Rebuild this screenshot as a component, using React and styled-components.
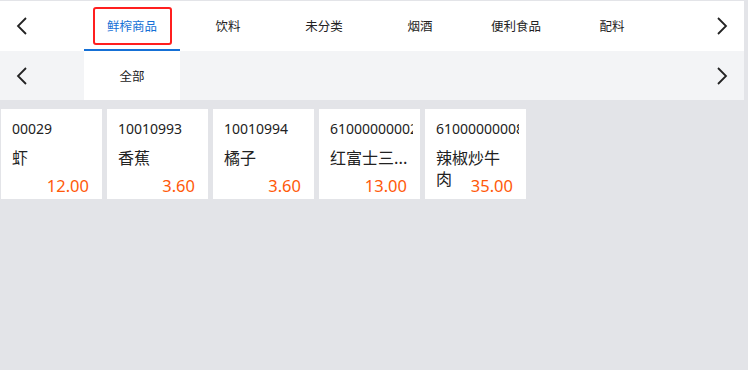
import React from 'react';
import styled, { createGlobalStyle } from 'styled-components';

const categories = ['鲜榨商品', '饮料', '未分类', '烟酒', '便利食品', '配料'];
const subCategories = ['全部'];

const products = [
  { code: '00029', name: '虾', price: '12.00' },
  { code: '10010993', name: '香蕉', price: '3.60' },
  { code: '10010994', name: '橘子', price: '3.60' },
  { code: '61000000002', name: '红富士三...', price: '13.00', single: true },
  { code: '61000000008', name: '辣椒炒牛肉', price: '35.00' },
];

const Chevron = ({ dir }) => (
  <svg width="12" height="18" viewBox="0 0 12 18">
    <polyline
      points={dir === 'left' ? '10,1 2,9 10,17' : '2,1 10,9 2,17'}
      fill="none"
      stroke="#222"
      strokeWidth="1.8"
      strokeLinejoin="miter"
    />
  </svg>
);

const App = () => {
  return (
    <>
      <GlobalStyle />
      <S_page>
        <S_tabBar>
          <S_arrow><Chevron dir="left" /></S_arrow>
          <S_tabList>
            {categories.map((c, i) => (
              <S_tab key={c} active={i === 0}>
                {c}
                {i === 0 && <S_marker />}
              </S_tab>
            ))}
          </S_tabList>
          <S_arrow><Chevron dir="right" /></S_arrow>
        </S_tabBar>
        <S_subBar>
          <S_arrow><Chevron dir="left" /></S_arrow>
          <S_tabList>
            {subCategories.map((c, i) => (
              <S_subTab key={c} active={i === 0}>{c}</S_subTab>
            ))}
          </S_tabList>
          <S_arrow><Chevron dir="right" /></S_arrow>
        </S_subBar>
        <S_grid>
          {products.map((p) => (
            <S_card key={p.code}>
              <S_code>{p.code}</S_code>
              <S_name single={p.single}>{p.name}</S_name>
              <S_price>{p.price}</S_price>
            </S_card>
          ))}
        </S_grid>
      </S_page>
    </>
  );
};

export default App;

const GlobalStyle = createGlobalStyle`
  html, body {
    margin: 0;
    padding: 0;
    background: #e3e4e8;
  }
  body {
    font-family: "Noto Sans", "Noto Sans CJK SC", sans-serif;
    color: #222;
  }
`;

const S_page = styled.div`
  width: 748px;
  height: 370px;
  padding-top: 1px;
  box-sizing: border-box;
  background: #e3e4e8;
`;

const S_tabBar = styled.div`
  display: flex;
  align-items: stretch;
  height: 50px;
  margin-right: 4px;
  background: #fff;
`;

const S_subBar = styled(S_tabBar)`
  height: 49px;
  background: #f3f4f6;
`;

const S_arrow = styled.div`
  width: 44px;
  flex: none;
  display: flex;
  align-items: center;
  justify-content: center;
  cursor: pointer;
`;

const S_tabList = styled.div`
  flex: 1;
  display: flex;
  padding-left: 40px;
  overflow: hidden;
`;

const S_tab = styled.div`
  position: relative;
  width: 96px;
  flex: none;
  display: flex;
  align-items: center;
  justify-content: center;
  box-sizing: border-box;
  padding-top: 1px;
  font-family: "Noto Sans CJK SC", sans-serif;
  font-size: 12.5px;
  color: ${(p) => (p.active ? '#1570d6' : '#222')};
  border-bottom: 2px solid ${(p) => (p.active ? '#1570d6' : 'transparent')};
  cursor: pointer;
`;

const S_marker = styled.span`
  position: absolute;
  left: 9px;
  right: 8px;
  top: 6px;
  bottom: 4px;
  border: 2px solid #ff1f1f;
  border-radius: 3px;
`;

const S_subTab = styled.div`
  width: 96px;
  flex: none;
  display: flex;
  align-items: center;
  justify-content: center;
  font-family: "Noto Sans CJK SC", sans-serif;
  font-size: 12.5px;
  color: #222;
  background: ${(p) => (p.active ? '#fff' : 'transparent')};
`;

const S_grid = styled.div`
  display: flex;
  gap: 5px;
  padding: 9px 0 0 1px;
`;

const S_card = styled.div`
  width: 101px;
  height: 90px;
  box-sizing: border-box;
  padding: 10px 7px 3px 11px;
  background: #fff;
  display: flex;
  flex-direction: column;
`;

const S_code = styled.div`
  font-size: 14px;
  line-height: 20px;
  white-space: nowrap;
  overflow: hidden;
`;

const S_name = styled.div`
  margin-top: 8px;
  height: 21px;
  padding-right: 6px;
  font-family: "Noto Sans CJK SC", sans-serif;
  font-size: 16px;
  line-height: 21px;
  white-space: ${(p) => (p.single ? 'nowrap' : 'normal')};
`;

const S_price = styled.div`
  margin-top: auto;
  padding-right: 6px;
  text-align: right;
  font-size: 16.5px;
  line-height: 20px;
  color: #ff5a0a;
`;
